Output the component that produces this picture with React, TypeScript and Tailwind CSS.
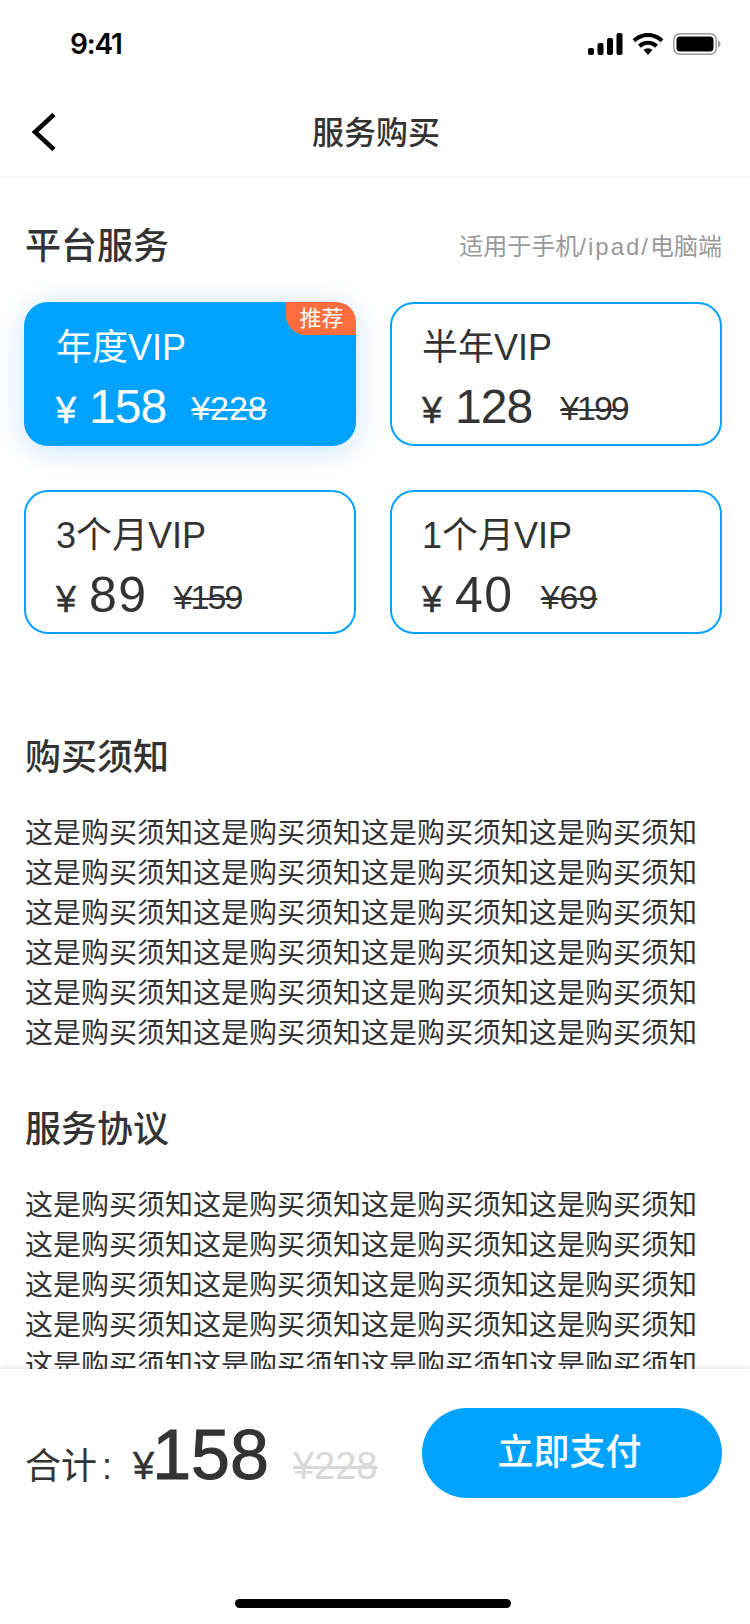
const FONT = "font-['Liberation_Sans','Noto_Sans_CJK_SC',sans-serif]";

const plans = [
  { name: "年度VIP", price: "158", old: "¥228", active: true, priceCls: "text-[48px] ml-[13px] tracking-[-1px]", oldCls: "ml-[25px]" },
  { name: "半年VIP", price: "128", old: "¥199", priceCls: "text-[48px] ml-[13px] tracking-[-1px]", oldCls: "ml-[28px] tracking-[-2px]" },
  { name: "3个月VIP", price: "89", old: "¥159", priceCls: "text-[50px] ml-[13px] tracking-[1.5px]", oldCls: "ml-[26px] tracking-[-2px]" },
  { name: "1个月VIP", price: "40", old: "¥69", priceCls: "text-[50px] ml-[13px] tracking-[1.5px]", oldCls: "ml-[27px]" },
];

const notice = Array.from({ length: 6 }, () => "这是购买须知这是购买须知这是购买须知这是购买须知");

function StatusBar() {
  return (
    <div className="h-[88px] shrink-0 flex items-start justify-between pt-[28px] pl-[70px] pr-[29px]">
      <span className="text-[28px] leading-[32px] font-semibold text-black font-['Inter','Liberation_Sans',sans-serif] tracking-[-1.2px]">9:41</span>
      <div className="flex items-center gap-[9px] pt-[5px]">
        <svg width="35" height="22" viewBox="0 0 35 22">
          <rect x="0" y="15" width="6" height="7" rx="2" fill="#000" />
          <rect x="9.5" y="10" width="6" height="12" rx="2" fill="#000" />
          <rect x="19" y="5" width="6" height="17" rx="2" fill="#000" />
          <rect x="28.5" y="0" width="6" height="22" rx="2" fill="#000" />
        </svg>
        <svg width="32" height="22" viewBox="0 0 32 22">
          <path d="M16 0C10 0 4.600 2.400 0.600 6.300L3.400 9.300C6.700 6.100 11.100 4.100 16 4.100S25.300 6.100 28.600 9.300L31.400 6.300C27.400 2.400 22 0 16 0Z" fill="#000" />
          <path d="M16 7.700C12.200 7.700 8.700 9.200 6.100 11.700L8.900 14.700C10.800 12.900 13.300 11.800 16 11.800S21.200 12.900 23.100 14.700L25.900 11.700C23.300 9.200 19.800 7.700 16 7.700Z" fill="#000" />
          <path d="M16 15.300C14.300 15.300 12.700 16 11.600 17.100L16 22L20.400 17.100C19.300 16 17.700 15.300 16 15.300Z" fill="#000" />
        </svg>
        <svg width="48" height="22" viewBox="0 0 48 22">
          <rect x="0.750" y="0.750" width="42.500" height="20.500" rx="6" fill="none" stroke="#000" strokeOpacity="0.4" strokeWidth="1.500" />
          <rect x="3.500" y="3.500" width="37" height="15" rx="3.500" fill="#000" />
          <path d="M45 7.500V14.500C46.500 14 47.500 12.700 47.500 11S46.500 8 45 7.500Z" fill="#000" fillOpacity="0.4" />
        </svg>
      </div>
    </div>
  );
}

function NavBar() {
  return (
    <div className="relative h-[90px] shrink-0 flex items-center justify-center border-b-2 border-[#f6f6f6]">
      <svg className="absolute left-[31px] top-[24px]" width="26" height="40" viewBox="0 0 26 40">
        <path d="M23 2.500L4 20L23 37.500" fill="none" stroke="#000" strokeWidth="4.500" />
      </svg>
      <span className="pl-[2px] pt-[2px] text-[32px] leading-[44px] font-medium text-[#333]">服务购买</span>
    </div>
  );
}

function PlanCard({ plan }: { plan: (typeof plans)[number] }) {
  const on = !!plan.active;
  return (
    <div
      className={`relative h-[144px] rounded-[24px] ${
        on
          ? "pl-[32px] pt-[21px] bg-[#00a2ff] text-white shadow-[0_4px_32px_rgba(0,130,220,0.22)]"
          : "pl-[30px] pt-[19px] border-2 border-[#00a2ff] bg-white text-[#333]"
      }`}
    >
      {on && (
        <span className="absolute right-0 top-0 w-[70px] pl-[1px] h-[33px] flex items-center justify-center bg-[#ff6d3f] text-[22px] leading-[33px] text-white rounded-tr-[20px] rounded-bl-[20px]">
          推荐
        </span>
      )}
      <div className="text-[36px] leading-[50px]">{plan.name}</div>
      <div className="flex items-baseline mt-[6px] h-[56px]">
        <span className="text-[36px] leading-[56px] [-webkit-text-stroke:0.5px_currentColor]">¥</span>
        <span className={`leading-[56px] ${plan.priceCls}`}>{plan.price}</span>
        <span className={`text-[34px] leading-[56px] line-through decoration-2 -translate-y-[3px] ${plan.oldCls}`}>{plan.old}</span>
      </div>
    </div>
  );
}

function TextBlock({ title, lines }: { title: string; lines: string[] }) {
  return (
    <div>
      <h2 className="text-[36px] leading-[48px] font-medium text-[#333]">{title}</h2>
      <div className="mt-[32px] text-[28px] leading-[40px] text-[#333]">
        {lines.map((l, i) => (
          <p key={i}>{l}</p>
        ))}
      </div>
    </div>
  );
}

export default function App() {
  return (
    <div className={`w-[750px] h-[1624px] bg-white flex flex-col overflow-hidden ${FONT}`}>
      <StatusBar />
      <NavBar />
      <div className="flex-1 min-h-0 overflow-hidden pl-[24px] pr-[28px] pt-[44px]">
        <div className="flex items-center justify-between pl-px">
          <h2 className="text-[36px] leading-[50px] font-medium text-[#333]">平台服务</h2>
          <span className="text-[24px] leading-[50px] text-[#999]">
            适用于手机<span className="tracking-[2px]">/ipad/</span>电脑端
          </span>
        </div>
        <div className="grid grid-cols-2 gap-x-[34px] gap-y-[44px] mt-[30px]">
          {plans.map((p) => (
            <PlanCard key={p.name} plan={p} />
          ))}
        </div>
        <div className="mt-[100px] pl-px">
          <TextBlock title="购买须知" lines={notice} />
        </div>
        <div className="mt-[52px] pl-px">
          <TextBlock title="服务协议" lines={notice} />
        </div>
      </div>
      <div className="relative h-[255px] shrink-0 bg-white shadow-[0_-1px_6px_rgba(0,0,0,0.12)] pl-[25px] pr-[28px] pt-[39px]">
        <div className="flex items-start justify-between">
          <div className="flex items-baseline h-[90px] pt-[4px] text-[#333]">
            <span className="text-[36px] leading-[86px]">
              合计<span className="ml-[5px]">:</span>
            </span>
            <span className="text-[38px] leading-[86px] ml-[21px] [-webkit-text-stroke:0.5px_currentColor]">¥</span>
            <span className="text-[70px] leading-[86px] -ml-[2px] [-webkit-text-stroke:1px_currentColor]">158</span>
            <span className="text-[38px] leading-[86px] line-through text-[#d8d8d8] ml-[24px]">¥228</span>
          </div>
          <button className="w-[300px] h-[90px] pr-[5px] rounded-[45px] bg-[#00a2ff] text-white text-[36px] font-medium">立即支付</button>
        </div>
        <div className="absolute left-[235px] bottom-[16px] w-[276px] h-[9px] rounded-full bg-black" />
      </div>
    </div>
  );
}
